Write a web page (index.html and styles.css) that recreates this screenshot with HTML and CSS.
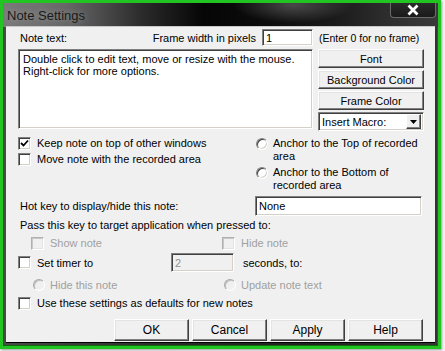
FILE: index.html
```html
<!DOCTYPE html>
<html>
<head>
<meta charset="utf-8">
<link rel="stylesheet" href="styles.css">
</head>
<body>
<div class="window">
  <div class="titlebar">
    <span class="title">Note Settings</span>
    <span class="close"><svg width="14" height="12" viewBox="0 0 14 12"><path d="M2.5 1.5 L11.5 10.5 M11.5 1.5 L2.5 10.5" stroke="#fff" stroke-width="2.8"/></svg></span>
  </div>
  <div class="client">
    <div class="top">
      <div class="row1">
        <span class="lbl-note">Note text:</span>
        <span class="lbl-frame">Frame width in pixels</span>
        <span class="input frame-in">1</span>
      </div>
      <div class="hint">(Enter 0 for no frame)</div>
      <div class="textarea">Double click to edit text, move or resize with the mouse.<br>Right-click for more options.</div>
      <div class="btnstack">
        <div class="btn">Font</div>
        <div class="btn">Background Color</div>
        <div class="btn">Frame Color</div>
        <div class="select"><span class="sel-text">Insert Macro:</span><span class="sel-btn"><svg width="7" height="4" viewBox="0 0 7 4"><path d="M0 0 H7 L3.5 4 Z" fill="#000"/></svg></span></div>
      </div>
    </div>

    <div class="mid">
      <div class="checks">
        <div class="chk-row"><span class="cb checked"><svg width="9" height="9" viewBox="0 0 9 9"><path d="M1 4 L3.5 6.5 L8 1.5" fill="none" stroke="#000" stroke-width="1.8"/></svg></span><span>Keep note on top of other windows</span></div>
        <div class="chk-row"><span class="cb"></span><span>Move note with the recorded area</span></div>
      </div>
      <div class="radios">
        <div class="radio-row"><span class="rb"></span><span class="rtext">Anchor to the Top of recorded<br>area</span></div>
        <div class="radio-row"><span class="rb"></span><span class="rtext">Anchor to the Bottom of<br>recorded area</span></div>
      </div>
      <div class="hk-label">Hot key to display/hide this note:</div>
      <div class="input hk-in">None</div>
    </div>

    <div class="pass">Pass this key to target application when pressed to:</div>

    <div class="pair pair-cb dis">
      <div class="chk-row"><span class="cb disabled"></span><span>Show note</span></div>
      <div class="chk-row"><span class="cb disabled"></span><span>Hide note</span></div>
    </div>

    <div class="timer">
      <div class="chk-row"><span class="cb"></span><span>Set timer to</span></div>
      <div class="input timer-in">2</div>
      <div class="secs">seconds, to:</div>
    </div>

    <div class="pair pair-rb dis">
      <div class="radio-row"><span class="rb disabled"></span><span>Hide this note</span></div>
      <div class="radio-row"><span class="rb disabled"></span><span>Update note text</span></div>
    </div>

    <div class="defaults chk-row"><span class="cb"></span><span>Use these settings as defaults for new notes</span></div>

    <div class="buttons">
      <div class="btn big">OK</div>
      <div class="btn big">Cancel</div>
      <div class="btn big">Apply</div>
      <div class="btn big">Help</div>
    </div>
  </div>
</div>
</body>
</html>
```

FILE: styles.css
```css
html, body {
  margin: 0;
  padding: 0;
  background: #f2f2f2;
}
body {
  width: 445px;
  height: 351px;
  overflow: hidden;
}
.window {
  width: 441px;
  height: 349px;
  box-sizing: border-box;
  border: 3px solid #22c422;
  box-shadow: inset 0 0 0 1px #0e6e0e, 1px 1px 2px rgba(0,0,0,0.35);
  background: linear-gradient(90deg, #4a4a4a 0%, #2a2a2a 40%, #222 70%, #333 100%);
  display: flex;
  flex-direction: column;
}
.titlebar {
  height: 24px;
  flex: none;
  display: flex;
  align-items: flex-start;
  justify-content: space-between;
  background:
    radial-gradient(ellipse 60px 18px at 290px 2px, rgba(120,120,120,0.55), rgba(120,120,120,0) 100%),
    linear-gradient(90deg, #7a7a7a 0px, #6a6a6a 60px, #2a2a2a 140px, #060606 200px, #0b0b0b 260px, #1a1a1a 330px, #2c2c2c 380px, #3a3a3a 435px);
}
.title {
  font-family: "Liberation Sans", Arial, sans-serif;
  font-size: 13px;
  color: #1a1a1a;
  margin: 5px 0 0 4px;
  text-shadow: 0 0 6px rgba(200,200,200,0.5);
}
.close {
  width: 46px;
  height: 15px;
  margin-right: 2px;
  box-sizing: border-box;
  border: 1px solid #6a6a6a;
  border-top: 0;
  border-radius: 0 0 4px 4px;
  background: linear-gradient(#2a2a2a, #1a1a1a);
  display: flex;
  align-items: center;
  justify-content: center;
}
.client {
  margin: 0 3px 4px 3px;
  height: 315px;
  flex: none;
  box-sizing: border-box;
  background: #f0f0f0;
  box-shadow: 0 -1px 0 #c8c8c8, 0 1px 0 #000;
  padding: 2px 11px 0 12px;
  font-family: "Liberation Sans", Arial, sans-serif;
  font-size: 11px;
  color: #000;
  display: flex;
  flex-direction: column;
}
.dis { color: #a0a0a0; }

/* sunken controls */
.input, .textarea, .select {
  background: #fff;
  box-sizing: border-box;
  border: 1px solid;
  border-color: #808080 #fff #fff #808080;
  box-shadow: inset 1px 1px 0 #404040, inset -1px -1px 0 #d4d0c8;
}
.input {
  display: flex;
  align-items: center;
  padding-left: 3px;
}
.btn {
  background: #f0f0f0;
  box-sizing: border-box;
  border: 1px solid;
  border-color: #fff #404040 #404040 #fff;
  box-shadow: inset -1px -1px 0 #808080, inset 1px 1px 0 #e3e3e3;
  display: flex;
  align-items: center;
  justify-content: center;
  font-size: 11px;
}

/* top block */
.top {
  display: grid;
  grid-template-columns: 295px 106px;
  grid-template-rows: 17px 82px;
  column-gap: 5px;
  row-gap: 3px;
  height: 102px;
}
.row1 {
  display: flex;
  align-items: center;
}
.lbl-note { margin-left: 2px; flex: 1; }
.lbl-frame { margin-right: 6px; }
.frame-in { width: 51px; height: 17px; }
.hint {
  display: flex;
  align-items: center;
  padding-left: 1px;
  white-space: nowrap;
  font-size: 10.5px;
}
.textarea {
  height: 80px;
  padding: 3px 4px;
  line-height: 12px;
}
.btnstack {
  display: flex;
  flex-direction: column;
  gap: 2px;
}
.btnstack .btn { height: 19px; }
.select {
  height: 19px;
  display: flex;
  align-items: center;
  justify-content: space-between;
  padding: 0 2px 0 3px;
}
.sel-text { font-size: 11px; }
.sel-btn {
  width: 15px;
  height: 15px;
  box-sizing: border-box;
  background: #f0f0f0;
  border: 1px solid;
  border-color: #fff #404040 #404040 #fff;
  box-shadow: inset -1px -1px 0 #808080;
  display: flex;
  align-items: center;
  justify-content: center;
}

/* checkbox / radio */
.chk-row, .radio-row {
  display: flex;
  align-items: center;
  height: 16px;
}
.cb {
  width: 13px;
  height: 13px;
  box-sizing: border-box;
  flex: none;
  margin-right: 6px;
  background: #fff;
  border: 1px solid;
  border-color: #808080 #fff #fff #808080;
  box-shadow: inset 1px 1px 0 #404040, inset -1px -1px 0 #d4d0c8;
  display: flex;
  align-items: center;
  justify-content: center;
}
.cb.disabled {
  background: #f0f0f0;
  border-color: #b0b0b0 #fff #fff #b0b0b0;
  box-shadow: inset 1px 1px 0 #c8c8c8, inset -1px -1px 0 #e4e4e4;
}
.rb {
  width: 12px;
  height: 12px;
  flex: none;
  box-sizing: border-box;
  margin-right: 5px;
  border-radius: 50%;
  background: #fff;
  border: 1px solid;
  border-color: #808080 #fff #fff #808080;
  box-shadow: inset 1px 1px 0 #404040, inset -1px -1px 0 #d4d0c8;
}
.rb.disabled {
  background: #f0f0f0;
  border-color: #a8a8a8 #fff #fff #a8a8a8;
  box-shadow: inset 1px 1px 0 #c0c0c0;
}

/* middle block */
.mid {
  margin-top: 7px;
  display: grid;
  grid-template-columns: 237px 167px;
  grid-template-rows: 58px 20px;
}
.checks { margin-top: -3px; }
.radios {
  padding-left: 1px;
  margin-top: -1px;
  display: flex;
  flex-direction: column;
  gap: 3px;
}
.radios .radio-row {
  height: auto;
  align-items: flex-start;
}
.radios .rb { margin-top: 1px; }
.rtext { line-height: 13px; }
.hk-label {
  display: flex;
  align-items: center;
  padding-left: 2px;
}
.hk-in { height: 20px; }

.pass {
  margin-top: 2px;
  height: 14px;
  line-height: 14px;
  padding-left: 2px;
}
.pair {
  display: grid;
  grid-template-columns: 191px auto;
}
.pair-cb { margin-top: 3px; padding-left: 13px; }
.pair-rb { margin-top: 5px; padding-left: 15px; }

.timer {
  margin-top: 2px;
  display: grid;
  grid-template-columns: 153px 63px auto;
  column-gap: 0;
  align-items: center;
  height: 19px;
}
.timer-in {
  height: 19px;
  background: #f0f0f0;
  color: #909090;
}
.secs { padding-left: 9px; }

.defaults { margin-top: 2px; }

.buttons {
  margin-top: 8px;
  display: flex;
  gap: 3px;
  padding-left: 96px;
}
.btn.big {
  width: 75px;
  height: 22px;
  font-size: 12px;
}
```
